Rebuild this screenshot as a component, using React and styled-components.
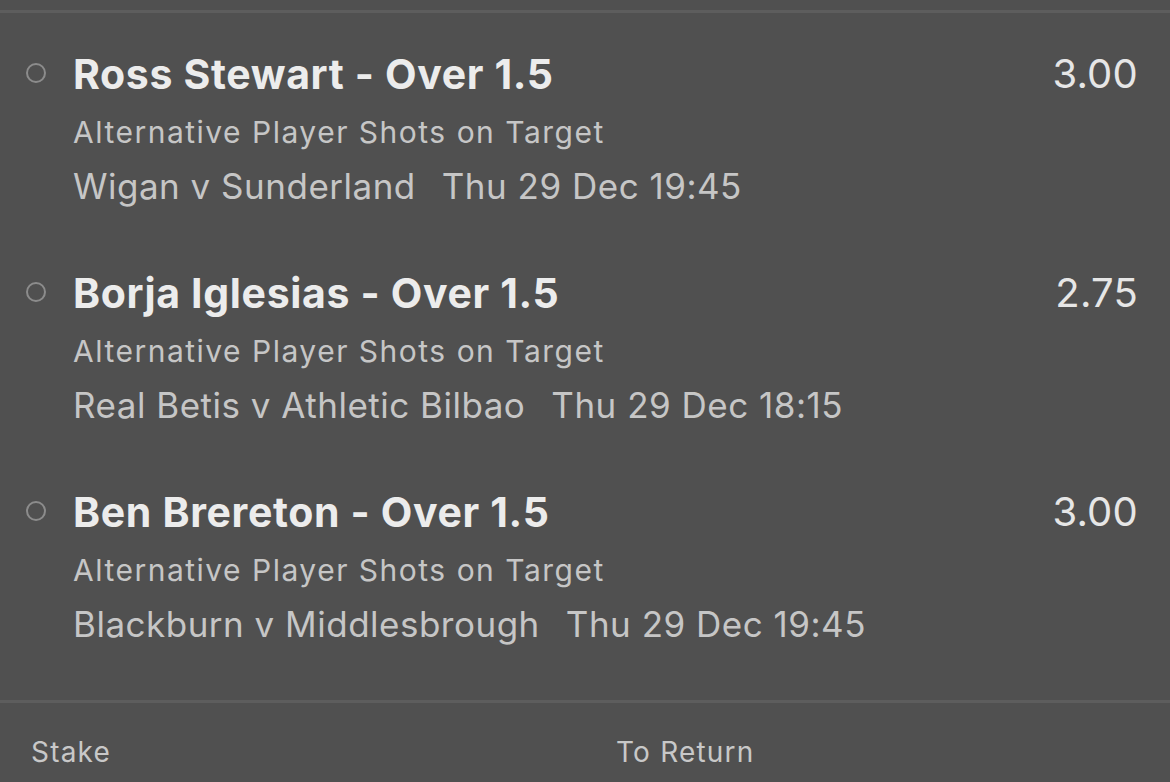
import styled, { createGlobalStyle } from "styled-components";

const GlobalStyle = createGlobalStyle`
  html, body {
    margin: 0;
    padding: 0;
    background: #505050;
  }
  body {
    font-family: Inter, "Noto Sans", "Liberation Sans", sans-serif;
    -webkit-font-smoothing: antialiased;
  }
`;

const Slip = styled.div`
  width: 1170px;
  height: 782px;
  background: #505050;
  display: flex;
  flex-direction: column;
  overflow: hidden;
`;

const Rule = styled.div`
  height: 3px;
  flex: none;
  background: #5d5d5d;
  margin-top: ${(props) => (props.top ? "10px" : "0")};
`;

const Selections = styled.div`
  display: flex;
  flex-direction: column;
  gap: 49px;
  padding: 30px 32px 0 26px;
  height: 687px;
  box-sizing: border-box;
`;

const Selection = styled.div`
  display: grid;
  grid-template-columns: 47px 1fr auto;
  align-items: start;
`;

// hollow radio dot in front of each pick
const Radio = styled.span`
  width: 20px;
  height: 20px;
  border: 2.5px solid #8c8c8c;
  border-radius: 50%;
  margin-top: 20px;
  box-sizing: border-box;
`;

const Details = styled.div`
  display: flex;
  flex-direction: column;
`;

const Title = styled.div`
  font-size: 41px;
  font-weight: 700;
  color: #ececec;
  line-height: 62px;
  letter-spacing: 0.65px;
`;

const Market = styled.div`
  font-size: 30px;
  color: #c6c6c6;
  line-height: 54px;
  letter-spacing: 1.5px;
`;

const Fixture = styled.div`
  font-size: 35px;
  color: #c6c6c6;
  line-height: 54px;
  letter-spacing: 0.5px;
  display: flex;
  gap: 26px;
`;

const Odds = styled.div`
  font-size: 40px;
  color: #e6e6e6;
  line-height: 62px;
  text-align: right;
  letter-spacing: 0.2px;
`;

const Footer = styled.div`
  display: grid;
  grid-template-columns: 585px 1fr;
  padding: 32px 31px 0;
  font-size: 28px;
  line-height: 34px;
  letter-spacing: 1.2px;
  color: #c8c8c8;
`;

const bets = [
  {
    title: "Ross Stewart - Over 1.5",
    odds: "3.00",
    fixture: "Wigan v Sunderland",
    kickoff: "Thu 29 Dec 19:45",
  },
  {
    title: "Borja Iglesias - Over 1.5",
    odds: "2.75",
    fixture: "Real Betis v Athletic Bilbao",
    kickoff: "Thu 29 Dec 18:15",
  },
  {
    title: "Ben Brereton - Over 1.5",
    odds: "3.00",
    fixture: "Blackburn v Middlesbrough",
    kickoff: "Thu 29 Dec 19:45",
  },
];

function App() {
  return (
    <>
      <GlobalStyle />
      <Slip>
        <Rule top />
        <Selections>
          {bets.map((bet) => (
            <Selection key={bet.title}>
              <Radio />
              <Details>
                <Title>{bet.title}</Title>
                <Market>Alternative Player Shots on Target</Market>
                <Fixture>
                  <span>{bet.fixture}</span>
                  <span>{bet.kickoff}</span>
                </Fixture>
              </Details>
              <Odds>{bet.odds}</Odds>
            </Selection>
          ))}
        </Selections>
        <Rule />
        <Footer>
          <span>Stake</span>
          <span>To Return</span>
        </Footer>
      </Slip>
    </>
  );
}

export default App;
